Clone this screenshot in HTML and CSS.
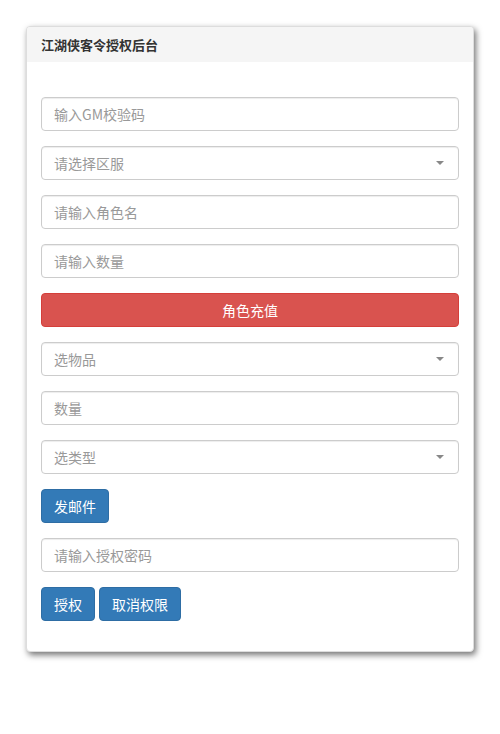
FILE: index.html
```html
<!DOCTYPE html>
<html>
<head>
<meta charset="utf-8">
<link rel="stylesheet" href="styles.css">
</head>
<body>
<div class="panel">
  <div class="panel-heading">江湖侠客令授权后台</div>
  <div class="panel-body">
    <div class="field"><input class="form-control" placeholder="输入GM校验码"></div>
    <div class="field"><div class="form-control select">请选择区服<span class="caret"></span></div></div>
    <div class="field"><input class="form-control" placeholder="请输入角色名"></div>
    <div class="field"><input class="form-control" placeholder="请输入数量"></div>
    <div class="field"><button class="btn btn-danger btn-block">角色充值</button></div>
    <div class="field"><div class="form-control select">选物品<span class="caret"></span></div></div>
    <div class="field"><input class="form-control" placeholder="数量"></div>
    <div class="field"><div class="form-control select">选类型<span class="caret"></span></div></div>
    <div class="field"><button class="btn btn-primary">发邮件</button></div>
    <div class="field"><input class="form-control" placeholder="请输入授权密码"></div>
    <div class="field row"><button class="btn btn-primary">授权</button><button class="btn btn-primary">取消权限</button></div>
  </div>
</div>
</body>
</html>
```
FILE: styles.css
```css
* { box-sizing: border-box; }
body {
  margin: 0;
  padding: 26px 26px;
  font-family: "Noto Sans CJK SC", "Liberation Sans", sans-serif;
  font-size: 14px;
  color: #333;
  background: #fff;
}
.panel {
  width: 448px;
  border: 1px solid #ddd;
  border-radius: 4px;
  background: #fff;
  box-shadow: 2px 3px 6px rgba(0,0,0,0.55);
  overflow: hidden;
}
.panel-heading {
  background: #f5f5f5;
  height: 35px;
  padding: 0 14px;
  display: flex;
  align-items: center;
  font-size: 13px;
  font-weight: bold;
  color: #333;
}
.panel-body {
  padding: 35px 14px 15px 14px;
}
.field {
  margin-bottom: 15px;
}
.row {
  display: flex;
  gap: 4px;
}
.form-control {
  display: flex;
  align-items: center;
  width: 100%;
  height: 34px;
  padding: 0 12px;
  font-family: inherit;
  font-size: 14px;
  color: #555;
  background: #fff;
  border: 1px solid #ccc;
  border-radius: 4px;
  box-shadow: inset 0 1px 1px rgba(0,0,0,0.075);
  outline: none;
}
.form-control::placeholder { color: #999; }
.select {
  color: #999;
  justify-content: space-between;
  padding-right: 12px;
}
.caret {
  width: 0;
  height: 0;
  border-left: 4px solid transparent;
  border-right: 4px solid transparent;
  border-top: 4px solid #888;
  margin-right: 2px;
}
.btn {
  height: 34px;
  padding: 0 12px;
  font-family: inherit;
  font-size: 14px;
  color: #fff;
  border: 1px solid transparent;
  border-radius: 4px;
  cursor: pointer;
}
.btn-block { width: 100%; }
.btn-danger {
  background: #d9534f;
  border-color: #d43f3a;
}
.btn-primary {
  background: #337ab7;
  border-color: #2e6da4;
}
```
